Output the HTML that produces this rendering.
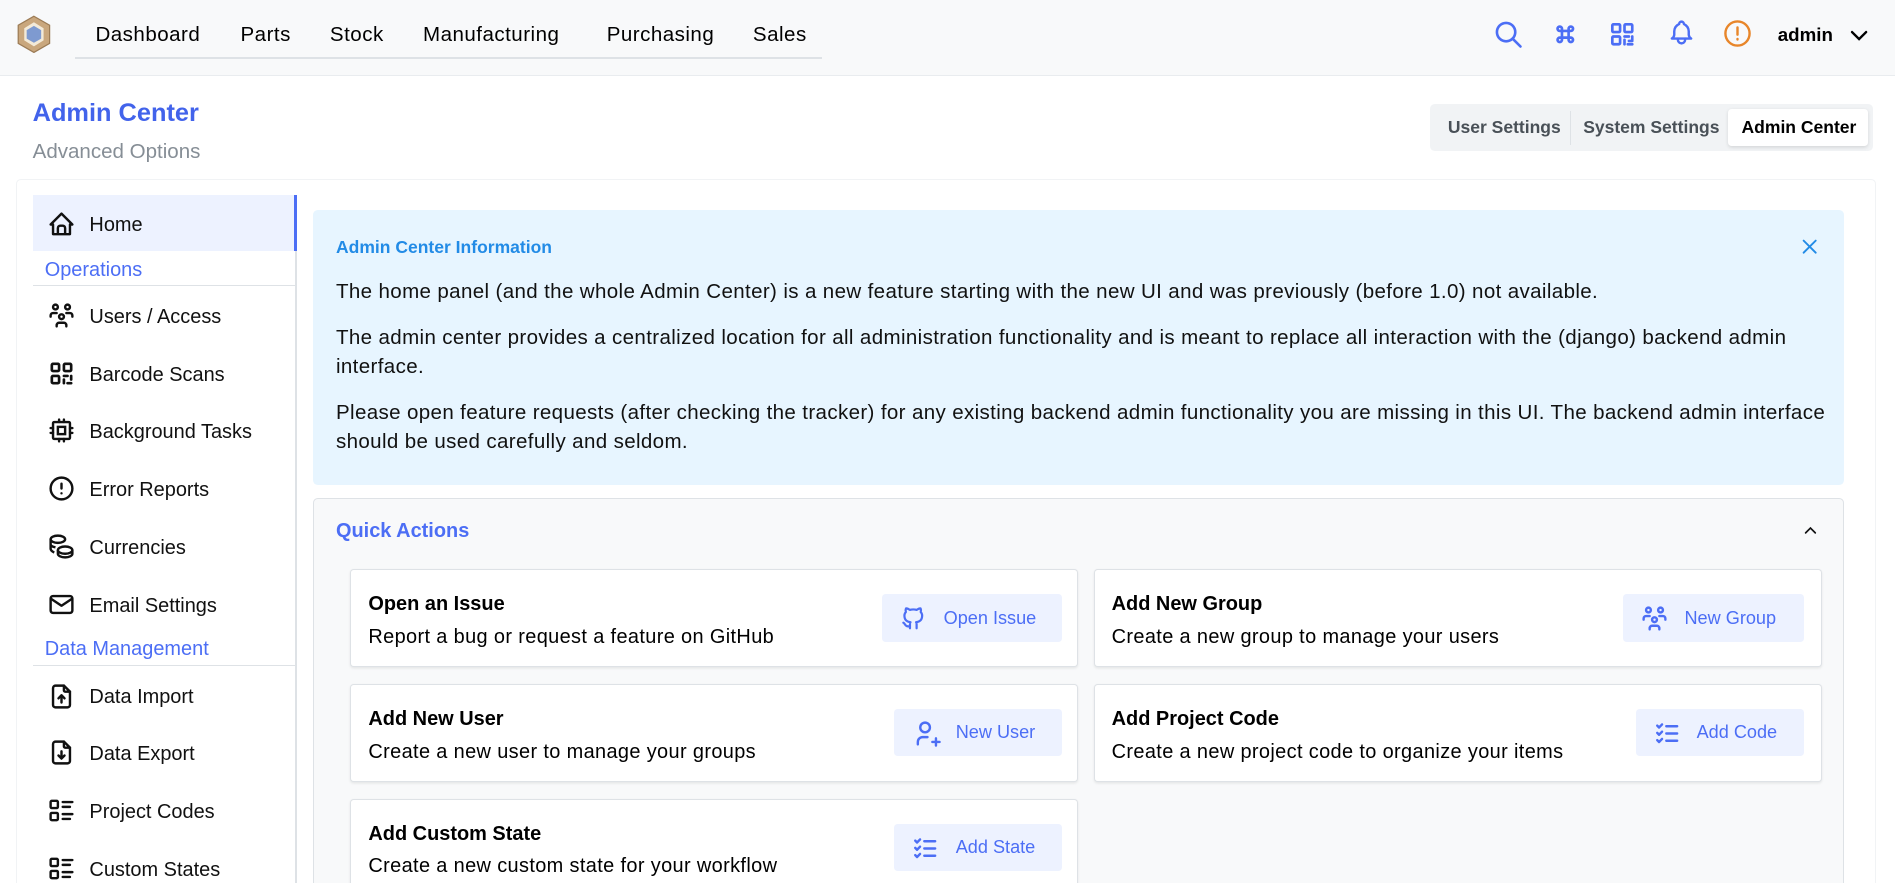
<!DOCTYPE html>
<html><head><meta charset="utf-8">
<style>
html{margin:0;padding:0;overflow:hidden;width:1895px;height:883px;}
body{margin:0;padding:0;width:1568px;height:731px;overflow:hidden;zoom:1.20855;font-family:"Liberation Sans",Arial,sans-serif;color:#000;background:#fff;position:relative;}
.a{position:absolute;white-space:nowrap;}
.hdr{position:absolute;left:0;top:0;width:1568px;height:62px;background:#f8f9fa;border-bottom:1px solid #e9ecef;}
.nav{font-size:17px;top:19px;letter-spacing:0.4px;}
.sb{font-size:16.5px;color:#111;}
.ic{position:absolute;}
.card{position:absolute;background:#fff;border:1px solid #dee2e6;border-radius:3px;box-shadow:0 1px 2px rgba(0,0,0,.08);height:79px;}
.ct{position:absolute;left:14px;top:19px;font-weight:bold;font-size:16.5px;}
.cd{position:absolute;left:14px;top:46px;font-size:16.5px;letter-spacing:0.3px;}
.btn{position:absolute;background:#edf2ff;border-radius:3px;color:#4c6ef5;font-size:15px;height:39px;}
.btn span{position:absolute;top:11px;}
.p{font-size:17px;letter-spacing:0.3px;color:#111;}
</style></head><body>
<div class="hdr"></div>
<svg class="ic" style="left:14px;top:12px" width="28" height="32" viewBox="0 0 28 32"><polygon points="14,1 27,8.5 27,23.5 14,31 1,23.5 1,8.5" fill="#c9a77d" stroke="#9b7b55"/><polygon points="14,6 22,11 22,21 14,26 6,21 6,11" fill="#f3ead8"/><polygon points="14,9 20,12.5 20,19.5 14,23 8,19.5 8,12.5" fill="#7e9ad0"/></svg>
<div class="a nav" style="left:79px">Dashboard</div>
<div class="a nav" style="left:199px">Parts</div>
<div class="a nav" style="left:273px">Stock</div>
<div class="a nav" style="left:350px">Manufacturing</div>
<div class="a nav" style="left:502px">Purchasing</div>
<div class="a nav" style="left:623px">Sales</div>
<div class="a" style="left:62px;top:47px;width:618px;height:2px;background:#dee2e6"></div>

<svg class="ic" style="left:1235px;top:16px" width="26" height="26" viewBox="0 0 24 24" fill="none" stroke="#4c6ef5" stroke-width="2" stroke-linecap="round"><circle cx="10" cy="10" r="7"/><path d="M21 21l-6-6"/></svg>
<svg class="ic" style="left:1284px;top:17px" width="22" height="22" viewBox="0 0 24 24" fill="none" stroke="#4c6ef5" stroke-width="2.4" stroke-linecap="round"><path d="M7 9a2 2 0 1 1 2-2v10a2 2 0 1 1-2-2h10a2 2 0 1 1-2 2V7a2 2 0 1 1 2 2H7"/></svg>
<svg class="ic" style="left:1331px;top:17px" width="22" height="22" viewBox="0 0 24 24" fill="none" stroke="#4c6ef5" stroke-width="2.4" stroke-linecap="round"><rect x="3" y="3" width="7" height="7" rx="1"/><rect x="14" y="3" width="7" height="7" rx="1"/><rect x="3" y="14" width="7" height="7" rx="1"/><path d="M14 14h4M21 14v3M14 17v4M17 21h4M18 18h3"/></svg>
<svg class="ic" style="left:1379px;top:15px" width="24" height="24" viewBox="0 0 24 24" fill="none" stroke="#4c6ef5" stroke-width="2" stroke-linecap="round" stroke-linejoin="round"><path d="M10 5a2 2 0 1 1 4 0a7 7 0 0 1 4 6v3a4 4 0 0 0 2 3H4a4 4 0 0 0 2-3v-3a7 7 0 0 1 4-6"/><path d="M9 17v1a3 3 0 0 0 6 0v-1"/></svg>
<svg class="ic" style="left:1426px;top:16px" width="24" height="24" viewBox="0 0 24 24" fill="none" stroke="#e8862a" stroke-width="2" stroke-linecap="round"><circle cx="12" cy="12" r="10"/><path d="M12 7v6M12 16.5v.5"/></svg>
<div class="a" style="left:1471px;top:20px;font-size:15.5px;font-weight:bold">admin</div>
<svg class="ic" style="left:1528px;top:19px" width="20" height="20" viewBox="0 0 24 24" fill="none" stroke="#000" stroke-width="2.4" stroke-linecap="round"><path d="M5 9l7 7 7-7"/></svg>

<div class="a" style="left:27px;top:82px;font-size:21px;font-weight:bold;color:#4263eb">Admin Center</div>
<div class="a" style="left:27px;top:116px;font-size:17px;color:#868e96">Advanced Options</div>

<div class="a" style="left:1183px;top:86px;width:367px;height:39px;background:#f1f3f5;border-radius:4px"></div>
<div class="a" style="left:1299px;top:92px;width:1px;height:28px;background:#dee2e6"></div>
<div class="a" style="left:1430px;top:90px;width:116px;height:31px;background:#fff;border-radius:3px;box-shadow:0 1px 3px rgba(0,0,0,.12)"></div>
<div class="a" style="left:1198px;top:97px;font-size:14.5px;font-weight:bold;color:#495057">User Settings</div>
<div class="a" style="left:1310px;top:97px;font-size:14.5px;font-weight:bold;color:#495057">System Settings</div>
<div class="a" style="left:1441px;top:97px;font-size:14.5px;font-weight:bold;color:#000">Admin Center</div>

<div class="a" style="left:13px;top:148px;width:1538px;height:583px;border:1px solid #f1f3f5;border-bottom:none;border-radius:4px 4px 0 0;background:#fff"></div>

<!-- sidebar -->
<div class="a" style="left:244px;top:161px;width:2px;height:570px;background:#dee2e6"></div>
<div class="a" style="left:27px;top:161px;width:218px;height:47px;background:#edf2ff"></div>
<div class="a" style="left:243px;top:161px;width:3px;height:47px;background:#4c6ef5"></div>
<div class="a" style="left:27px;top:236px;width:217px;height:1px;background:#dee2e6"></div>
<div class="a" style="left:27px;top:550px;width:217px;height:1px;background:#dee2e6"></div>
<div class="a" style="left:37px;top:214px;font-size:16.5px;color:#4c6ef5">Operations</div>
<div class="a" style="left:37px;top:528px;font-size:16.5px;color:#4c6ef5">Data Management</div>

<svg class="ic" style="left:39px;top:174px" width="24" height="24" viewBox="0 0 24 24" fill="none" stroke="#111" stroke-width="2" stroke-linejoin="round"><path d="M5 12H3l9-9 9 9h-2v8H5z"/><path d="M9 20v-5a2 2 0 0 1 2-2h2a2 2 0 0 1 2 2v5"/></svg>
<div class="a sb" style="left:74px;top:177px">Home</div>

<svg class="ic" style="left:39px;top:249px" width="24" height="24" viewBox="0 0 24 24" fill="none" stroke="#111" stroke-width="2" stroke-linecap="round"><circle cx="12" cy="13" r="2"/><path d="M8 21v-1a2 2 0 0 1 2-2h4a2 2 0 0 1 2 2v1"/><circle cx="7" cy="5" r="2"/><circle cx="17" cy="5" r="2"/><path d="M3 13v-1a2 2 0 0 1 2-2h3M21 13v-1a2 2 0 0 0-2-2h-3"/></svg>
<div class="a sb" style="left:74px;top:253px">Users / Access</div>

<svg class="ic" style="left:39px;top:297px" width="24" height="24" viewBox="0 0 24 24" fill="none" stroke="#111" stroke-width="2.2" stroke-linecap="round"><rect x="4" y="4" width="6" height="6" rx="1"/><rect x="14" y="4" width="6" height="6" rx="1"/><rect x="4" y="14" width="6" height="6" rx="1"/><path d="M14 14h3M20 14v3M14 17v3M17 20h3"/></svg>
<div class="a sb" style="left:74px;top:301px">Barcode Scans</div>

<svg class="ic" style="left:39px;top:344px" width="24" height="24" viewBox="0 0 24 24" fill="none" stroke="#111" stroke-width="2" stroke-linecap="round"><rect x="5" y="5" width="14" height="14" rx="1"/><rect x="9" y="9" width="6" height="6"/><path d="M3 10h2M3 14h2M10 3v2M14 3v2M21 10h-2M21 14h-2M14 21v-2M10 21v-2"/></svg>
<div class="a sb" style="left:74px;top:348px">Background Tasks</div>

<svg class="ic" style="left:39px;top:392px" width="24" height="24" viewBox="0 0 24 24" fill="none" stroke="#111" stroke-width="2" stroke-linecap="round"><circle cx="12" cy="12" r="9"/><path d="M12 8v4M12 16v.01"/></svg>
<div class="a sb" style="left:74px;top:396px">Error Reports</div>

<svg class="ic" style="left:39px;top:440px" width="24" height="24" viewBox="0 0 24 24" fill="none" stroke="#111" stroke-width="2"><ellipse cx="15" cy="15" rx="6" ry="3"/><path d="M9 15v3c0 1.7 2.7 3 6 3s6-1.3 6-3v-3"/><ellipse cx="9" cy="6" rx="6" ry="3"/><path d="M3 6v8c0 1 1 2 3 3M3 10c0 1.2 1.5 2.2 4 2.7"/></svg>
<div class="a sb" style="left:74px;top:444px">Currencies</div>

<svg class="ic" style="left:39px;top:488px" width="24" height="24" viewBox="0 0 24 24" fill="none" stroke="#111" stroke-width="2" stroke-linejoin="round"><rect x="3" y="5" width="18" height="14" rx="2"/><path d="M3 7l9 6 9-6"/></svg>
<div class="a sb" style="left:74px;top:492px">Email Settings</div>

<svg class="ic" style="left:39px;top:564px" width="24" height="24" viewBox="0 0 24 24" fill="none" stroke="#111" stroke-width="2" stroke-linecap="round" stroke-linejoin="round"><path d="M14 3v4a1 1 0 0 0 1 1h4"/><path d="M17 21H7a2 2 0 0 1-2-2V5a2 2 0 0 1 2-2h7l5 5v11a2 2 0 0 1-2 2z"/><path d="M12 17v-6M9.5 13.5L12 11l2.5 2.5"/></svg>
<div class="a sb" style="left:74px;top:568px">Data Import</div>

<svg class="ic" style="left:39px;top:611px" width="24" height="24" viewBox="0 0 24 24" fill="none" stroke="#111" stroke-width="2" stroke-linecap="round" stroke-linejoin="round"><path d="M14 3v4a1 1 0 0 0 1 1h4"/><path d="M17 21H7a2 2 0 0 1-2-2V5a2 2 0 0 1 2-2h7l5 5v11a2 2 0 0 1-2 2z"/><path d="M12 11v6M9.5 14.5L12 17l2.5-2.5"/></svg>
<div class="a sb" style="left:74px;top:615px">Data Export</div>

<svg class="ic" style="left:39px;top:659px" width="24" height="24" viewBox="0 0 24 24" fill="none" stroke="#111" stroke-width="2" stroke-linecap="round"><rect x="3" y="4" width="6" height="6" rx="1"/><rect x="3" y="14" width="6" height="6" rx="1"/><path d="M13 5h8M13 9h6M13 15h8M13 19h6"/></svg>
<div class="a sb" style="left:74px;top:663px">Project Codes</div>

<svg class="ic" style="left:39px;top:707px" width="24" height="24" viewBox="0 0 24 24" fill="none" stroke="#111" stroke-width="2" stroke-linecap="round"><rect x="3" y="4" width="6" height="6" rx="1"/><rect x="3" y="14" width="6" height="6" rx="1"/><path d="M13 5h8M13 9h6M13 15h8M13 19h6"/></svg>
<div class="a sb" style="left:74px;top:711px">Custom States</div>

<!-- alert -->
<div class="a" style="left:259px;top:174px;width:1267px;height:227px;background:#e7f5ff;border-radius:4px"></div>
<div class="a" style="left:278px;top:196px;font-size:14.5px;font-weight:bold;color:#228be6">Admin Center Information</div>
<svg class="ic" style="left:1489px;top:196px" width="16" height="16" viewBox="0 0 16 16" stroke="#228be6" stroke-width="1.6" stroke-linecap="round"><path d="M3 3l10 10M13 3L3 13"/></svg>
<div class="a p" style="left:278px;top:232px">The home panel (and the whole Admin Center) is a new feature starting with the new UI and was previously (before 1.0) not available.</div>
<div class="a p" style="left:278px;top:270px">The admin center provides a centralized location for all administration functionality and is meant to replace all interaction with the (django) backend admin</div>
<div class="a p" style="left:278px;top:294px">interface.</div>
<div class="a p" style="left:278px;top:332px">Please open feature requests (after checking the tracker) for any existing backend admin functionality you are missing in this UI. The backend admin interface</div>
<div class="a p" style="left:278px;top:356px">should be used carefully and seldom.</div>

<!-- quick actions -->
<div class="a" style="left:259px;top:412px;width:1265px;height:319px;background:#f8f9fa;border:1px solid #dee2e6;border-bottom:none;border-radius:4px 4px 0 0"></div>
<div class="a" style="left:278px;top:430px;font-size:16.5px;font-weight:bold;color:#4c6ef5">Quick Actions</div>
<svg class="ic" style="left:1491px;top:432px" width="14" height="14" viewBox="0 0 14 14" fill="none" stroke="#111" stroke-width="1.4" stroke-linecap="round"><path d="M3 9l4-4 4 4"/></svg>

<div class="card" style="left:290px;top:471px;width:600px">
<div class="ct">Open an Issue</div><div class="cd">Report a bug or request a feature on GitHub</div>
<div class="btn" style="left:439px;top:20px;width:149px"><svg class="ic" style="left:15px;top:9px" width="22" height="22" viewBox="0 0 24 24" fill="none" stroke="#4c6ef5" stroke-width="2" stroke-linecap="round" stroke-linejoin="round"><path d="M9 19c-4.3 1.4-4.3-2.5-6-3m12 5v-3.5c0-1 .1-1.4-.5-2c2.8-.3 5.5-1.4 5.5-6a4.6 4.6 0 0 0-1.3-3.2a4.2 4.2 0 0 0-.1-3.2s-1.1-.3-3.5 1.3a12.3 12.3 0 0 0-6.2 0C6.5 2.8 5.4 3.1 5.4 3.1a4.2 4.2 0 0 0-.1 3.2A4.6 4.6 0 0 0 4 9.5c0 4.6 2.7 5.7 5.5 6c-.6.6-.6 1.2-.5 2V21"/></svg><span style="left:51px">Open Issue</span></div>
</div>
<div class="card" style="left:905px;top:471px;width:601px">
<div class="ct">Add New Group</div><div class="cd">Create a new group to manage your users</div>
<div class="btn" style="left:437px;top:20px;width:150px"><svg class="ic" style="left:14px;top:8px" width="24" height="24" viewBox="0 0 24 24" fill="none" stroke="#4c6ef5" stroke-width="2" stroke-linecap="round"><circle cx="12" cy="13" r="2"/><path d="M8 21v-1a2 2 0 0 1 2-2h4a2 2 0 0 1 2 2v1"/><circle cx="7" cy="5" r="2"/><circle cx="17" cy="5" r="2"/><path d="M3 13v-1a2 2 0 0 1 2-2h3M21 13v-1a2 2 0 0 0-2-2h-3"/></svg><span style="left:51px">New Group</span></div>
</div>
<div class="card" style="left:290px;top:566px;width:600px">
<div class="ct">Add New User</div><div class="cd">Create a new user to manage your groups</div>
<div class="btn" style="left:449px;top:20px;width:139px"><svg class="ic" style="left:16px;top:8px" width="24" height="24" viewBox="0 0 24 24" fill="none" stroke="#4c6ef5" stroke-width="2" stroke-linecap="round"><circle cx="10" cy="7" r="4"/><path d="M4 21v-2a4 4 0 0 1 4-4h4M16 19h6M19 16v6"/></svg><span style="left:51px">New User</span></div>
</div>
<div class="card" style="left:905px;top:566px;width:601px">
<div class="ct">Add Project Code</div><div class="cd">Create a new project code to organize your items</div>
<div class="btn" style="left:448px;top:20px;width:139px"><svg class="ic" style="left:14px;top:8px" width="24" height="24" viewBox="0 0 24 24" fill="none" stroke="#4c6ef5" stroke-width="2" stroke-linecap="round" stroke-linejoin="round"><path d="M3.5 5.5L5 7l2.5-2.5M3.5 11.5L5 13l2.5-2.5M3.5 17.5L5 19l2.5-2.5M11 6h9M11 12h9M11 18h9"/></svg><span style="left:50px">Add Code</span></div>
</div>
<div class="card" style="left:290px;top:661px;width:600px;height:70px;border-bottom:none;border-radius:3px 3px 0 0">
<div class="ct">Add Custom State</div><div class="cd">Create a new custom state for your workflow</div>
<div class="btn" style="left:449px;top:20px;width:139px"><svg class="ic" style="left:14px;top:8px" width="24" height="24" viewBox="0 0 24 24" fill="none" stroke="#4c6ef5" stroke-width="2" stroke-linecap="round" stroke-linejoin="round"><path d="M3.5 5.5L5 7l2.5-2.5M3.5 11.5L5 13l2.5-2.5M3.5 17.5L5 19l2.5-2.5M11 6h9M11 12h9M11 18h9"/></svg><span style="left:51px">Add State</span></div>
</div>
</body></html>
